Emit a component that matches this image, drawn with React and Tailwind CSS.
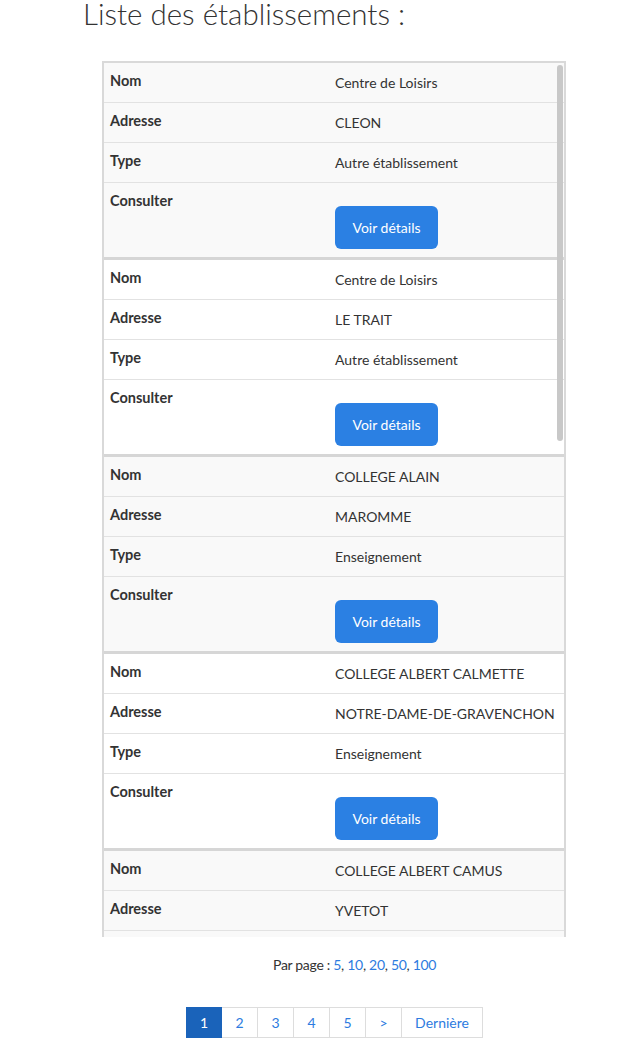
import React from "react";

const items = [
  { nom: "Centre de Loisirs", adresse: "CLEON", type: "Autre établissement" },
  { nom: "Centre de Loisirs", adresse: "LE TRAIT", type: "Autre établissement" },
  { nom: "COLLEGE ALAIN", adresse: "MAROMME", type: "Enseignement" },
  { nom: "COLLEGE ALBERT CALMETTE", adresse: "NOTRE-DAME-DE-GRAVENCHON", type: "Enseignement" },
  { nom: "COLLEGE ALBERT CAMUS", adresse: "YVETOT", type: "Enseignement" },
];

function Row({ label, children, last }) {
  return (
    <div className={"flex " + (last ? "border-b-[3px] border-[#d6d6d6]" : "border-b border-[#e2e2e2]")}>
      <div className="w-[225px] shrink-0 pl-[6px] pt-[6px] pb-2 text-[14.5px] leading-[23px] font-bold text-[#333]">{label}</div>
      <div className="flex-1 pl-[6px] pt-2 pb-2 text-[14px] leading-[23px] text-[#333]">{children}</div>
    </div>
  );
}

export default function App() {
  return (
    <div className="bg-white w-[633px] h-[1040px] overflow-hidden" style={{ fontFamily: "Lato, 'Noto Sans', sans-serif" }}>
      <h1 className="ml-[83px] -mt-[6px] text-[29.5px] leading-[40px] font-light text-[#333]">Liste des établissements :</h1>
      <div className="relative ml-[102px] mt-[27px] w-[464px] h-[876px] overflow-hidden border-l-2 border-r-2 border-t-2 border-[#d9d9d9]">
        {items.map((it, i) => (
          <div key={i} className={i % 2 === 0 ? "bg-[#f9f9f9]" : "bg-white"}>
            <Row label="Nom">{it.nom}</Row>
            <Row label="Adresse">{it.adresse}</Row>
            <Row label="Type">{it.type}</Row>
            <Row label="Consulter" last>
              <div className="h-[15px]" />
              <button className="w-[103px] h-[43px] rounded-[6px] bg-[#2b80e3] text-white text-[14px] leading-[20px]">Voir détails</button>
            </Row>
          </div>
        ))}
        <div className="absolute right-[1px] top-[2px] w-[6px] h-[376px] rounded-full bg-[#c8c8c8]" />
      </div>
      <div className="mt-[18px] pl-[273px] text-[14px] leading-[20px] tracking-[-0.3px] text-[#333]">
        Par page : <span className="text-[#2d7be0]">5</span>, <span className="text-[#2d7be0]">10</span>, <span className="text-[#2d7be0]">20</span>, <span className="text-[#2d7be0]">50</span>, <span className="text-[#2d7be0]">100</span>
      </div>
      <div className="mt-[32px] ml-[186px] flex text-[14px]">
        <div className="w-[36px] h-[31px] flex items-center justify-center bg-[#1a63ba] text-white border border-[#1a63ba]">1</div>
        {["2", "3", "4", "5", ">"].map((p) => (
          <div key={p} className="w-[36px] h-[31px] flex items-center justify-center border border-l-0 border-[#dddddd] text-[#2d7be0]">{p}</div>
        ))}
        <div className="w-[81px] h-[31px] flex items-center justify-center border border-l-0 border-[#dddddd] text-[#2d7be0]">Dernière</div>
      </div>
    </div>
  );
}
